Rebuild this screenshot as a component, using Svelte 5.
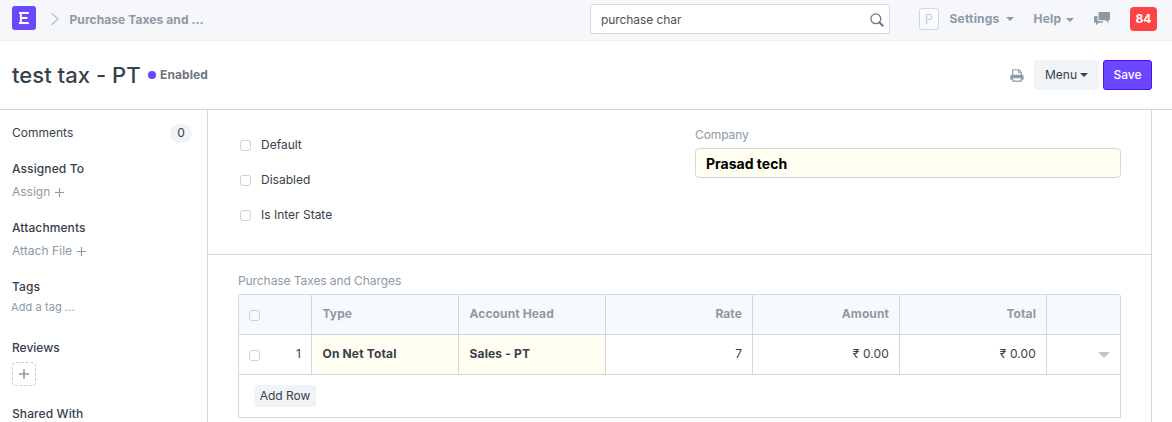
<script>
  const checks = ['Default', 'Disabled', 'Is Inter State'];
</script>

<div class="page">
  <header class="navbar">
    <div class="logo">
      <svg width="24" height="24" viewBox="0 0 24 24"><path d="M7 7h9.800M8.900 7v10M7 17h9.800M8.900 12h6.600" fill="none" stroke="#fff" stroke-width="2" /></svg>
    </div>
    <svg class="crumb-sep" width="10" height="14" viewBox="0 0 10 14"><path d="M1.500 1l6.300 6-6.300 6" fill="none" stroke="#b8c2cc" stroke-width="1.400" /></svg>
    <span class="crumb">Purchase Taxes and ...</span>
    <div class="search">
      <span>purchase char</span>
      <svg width="14" height="14" viewBox="0 0 14 14"><circle cx="5.800" cy="5.800" r="4.900" fill="none" stroke="#6c7680" stroke-width="1.300" /><path d="M9.200 9.200l4 4" stroke="#6c7680" stroke-width="2" /></svg>
    </div>
    <div class="avatar">P</div>
    <span class="nav-item settings">Settings<i class="caret"></i></span>
    <span class="nav-item help">Help<i class="caret"></i></span>
    <svg class="chat" width="16" height="14" viewBox="0 0 16 14"><path d="M5.500 0h9.500a1 1 0 0 1 1 1v6.200a1 1 0 0 1-1 1h-.5v2.600L11.800 8.200H5.500a1 1 0 0 1-1-1V1a1 1 0 0 1 1-1z" fill="#8d99a6" /><path d="M1 4h2.500v3.700A1.500 1.500 0 0 0 5 9.200h4v.6a1 1 0 0 1-1 1H4.800L2 13.200v-2.400H1a1 1 0 0 1-1-1V5a1 1 0 0 1 1-1z" fill="#8d99a6" /></svg>
    <div class="count">84</div>
  </header>

  <div class="head">
    <h1>test tax - PT</h1>
    <i class="dot"></i>
    <span class="status">Enabled</span>
    <svg class="print" width="14" height="13" viewBox="0 0 14 13"><path d="M2.700 6V.8h6.200L11.300 3.200V6" fill="none" stroke="#8d99a6" stroke-width="1.100" /><path d="M8.500 1v2.600h2.700" fill="none" stroke="#8d99a6" stroke-width=".9" /><path d="M2 5.800h10A1.600 1.600 0 0 1 13.600 7.400v3.400H.4V7.400A1.600 1.600 0 0 1 2 5.800z" fill="#8d99a6" /><path d="M2.700 8.800h8.600v3.300H2.700z" fill="#fff" stroke="#8d99a6" stroke-width="1.100" /></svg>
    <button class="menu">Menu<i class="caret"></i></button>
    <button class="save">Save</button>
  </div>

  <div class="body">
    <aside>
      <div class="comments"><span>Comments</span><b>0</b></div>
      <h2>Assigned To</h2>
      <div class="action">Assign <svg width="9" height="9" viewBox="0 0 9 9"><path d="M4.500 0v9M0 4.500h9" stroke="#8d99a6" stroke-width="1.200" /></svg></div>
      <h2>Attachments</h2>
      <div class="action attach">Attach File <svg width="9" height="9" viewBox="0 0 9 9"><path d="M4.500 0v9M0 4.500h9" stroke="#8d99a6" stroke-width="1.200" /></svg></div>
      <h2>Tags</h2>
      <div class="tag">Add a tag ...</div>
      <h2 class="reviews">Reviews</h2>
      <div class="add"><svg width="10" height="10" viewBox="0 0 10 10"><path d="M5 0v10M0 5h10" stroke="#8d99a6" stroke-width="1.500" /></svg></div>
      <h2 class="shared">Shared With</h2>
    </aside>

    <main>
      <section class="fields">
        <div class="checks">
          {#each checks as label}
            <div class="check"><i class="box"></i><span>{label}</span></div>
          {/each}
        </div>
        <div class="company">
          <div class="label">Company</div>
          <div class="input">Prasad tech</div>
        </div>
      </section>
      <section class="taxes">
        <div class="label">Purchase Taxes and Charges</div>
        <div class="grid">
          <div class="row heading">
            <div class="idx"><i class="box"></i></div>
            <div>Type</div>
            <div>Account Head</div>
            <div class="num">Rate</div>
            <div class="num">Amount</div>
            <div class="num">Total</div>
            <div></div>
          </div>
          <div class="row">
            <div class="idx"><i class="box"></i><span>1</span></div>
            <div class="req">On Net Total</div>
            <div class="req">Sales - PT</div>
            <div class="num">7</div>
            <div class="num money">₹ 0.00</div>
            <div class="num money">₹ 0.00</div>
            <div class="num open"><i class="caret"></i></div>
          </div>
        </div>
        <div class="footer"><button>Add Row</button></div>
      </section>
    </main>
  </div>
</div>

<style>
  :global(body) { background: #fff; overflow: hidden; }
  .page, .page * { box-sizing: border-box; }
  .page {
    height: 422px;
    overflow: hidden;
    display: flex;
    flex-direction: column;
    font-family: Inter, "Noto Sans", sans-serif;
    font-size: 12px;
    line-height: 18px;
    color: #36414c;
  }
  button { font: inherit; border: 0; padding: 0; border-radius: 3px; }
  svg { display: block; flex: none; }
  .caret {
    display: inline-block;
    border: 4px solid transparent;
    border-top-color: currentColor;
    border-bottom: 0;
  }
  .navbar {
    height: 41px;
    flex: none;
    display: flex;
    align-items: flex-start;
    background: #f5f7fa;
    border-bottom: 1px solid #ebeff2;
    color: #8d99a6;
    font-weight: 700;
  }
  .logo { width: 24px; height: 24px; margin: 6px 0 0 12px; border-radius: 3px; background: #6b48ff; }
  .crumb-sep { margin: 12px 0 0 14px; }
  .crumb { margin: 11px 0 0 9.5px; width: 520.5px; letter-spacing: 0.08px; }
  .search {
    width: 300px;
    height: 30px;
    margin-top: 4px;
    padding: 1px 5px 0 10px;
    display: flex;
    align-items: center;
    justify-content: space-between;
    background: #fff;
    border: 1px solid #d1d8dd;
    border-radius: 3px;
    color: #4c5054;
    font-weight: 400;
    letter-spacing: -0.08px;
  }
  .avatar {
    width: 20px;
    height: 22px;
    margin: 8px 0 0 29px;
    border: 1px solid #d1d8dd;
    border-radius: 3px;
    background: #fafbfc;
    color: #c9d1d7;
    font-size: 13px;
    line-height: 20px;
    text-align: center;
    font-weight: 400;
  }
  .nav-item { display: flex; align-items: center; gap: 5px; margin-top: 10px; white-space: nowrap; letter-spacing: 0.2px; }
  .settings { margin-left: 10.5px; width: 84px; }
  .help { width: 60.5px; }
  .settings .caret { margin-left: 1px; }
  .help .caret { margin-top: 1px; }
  .chat { margin-top: 12px; }
  .count {
    width: 27px;
    height: 24px;
    margin: 7px 0 0 20px;
    border-radius: 4px;
    background: #ff4245;
    color: #fff;
    line-height: 24px;
    text-align: center;
  }
  .head {
    height: 69px;
    flex: none;
    display: flex;
    align-items: center;
    padding: 0 20px 0 12px;
    border-bottom: 1px solid #d1d8dd;
  }
  h1 { margin: 0; width: 136px; font-size: 22px; line-height: 30px; font-weight: 500; white-space: nowrap; letter-spacing: 0.04px; }
  .dot { width: 8px; height: 8px; border-radius: 50%; background: #6b48ff; }
  .status { margin-left: 4px; font-weight: 700; color: #6c7680; letter-spacing: 0.1px; }
  .print { margin-left: auto; }
  .menu {
    width: 65px;
    height: 30px;
    margin-left: 10px;
    display: flex;
    align-items: center;
    justify-content: center;
    gap: 3px;
    background: #f0f4f7;
    color: #36414c;
  }
  .save { width: 49px; height: 30px; margin-left: 4px; background: #6b48ff; border: 1px solid #4f0cff; color: #fff; font-weight: 500; }
  .body { flex: 1; display: flex; min-height: 0; }
  aside { width: 208px; flex: none; padding: 14px 15px 0 12px; border-right: 1px solid #d1d8dd; }
  .comments { display: flex; justify-content: space-between; height: 18px; }
  .comments b { width: 22px; height: 19px; border-radius: 10px; background: #f0f4f7; font-weight: 400; text-align: center; }
  h2 { margin: 18px 0 0; font-size: 12px; line-height: 18px; font-weight: 500; letter-spacing: 0.1px; }
  .action { display: flex; align-items: center; gap: 5px; margin-top: 5px; color: #8d99a6; }
  .attach { letter-spacing: 0.05px; }
  .tag { margin: 3px 0 0 -1px; font-size: 11px; line-height: 16px; color: #8d99a6; letter-spacing: 0.08px; }
  .reviews { margin-top: 24px; letter-spacing: 0; }
  .add {
    width: 24px;
    height: 24px;
    margin-top: 5px;
    display: grid;
    place-items: center;
    border: 1px dashed #c4ced6;
    border-radius: 4px;
  }
  .shared { margin-top: 19px; }
  main { width: 944px; flex: none; border-right: 1px solid #d1d8dd; }
  .fields { height: 145px; display: flex; border-bottom: 1px solid #d1d8dd; }
  .checks { width: 487px; padding: 26px 0 0 32px; display: flex; flex-direction: column; gap: 17px; }
  .check { display: flex; align-items: center; gap: 10px; }
  .box { width: 11px; height: 11px; flex: none; border: 1px solid #c9d3da; border-radius: 3px; background: #fff; }
  .label { color: #8d99a6; letter-spacing: -0.08px; }
  .company { width: 426px; padding-top: 16px; }
  .input {
    height: 30px;
    margin-top: 4px;
    padding: 0 10px;
    border: 1px solid #d1d8dd;
    border-radius: 4px;
    background: #fffef0;
    color: #000;
    font-size: 14px;
    line-height: 29px;
    font-weight: 700;
  }
  .taxes { padding: 17px 30px 0; }
  .grid { margin-top: 4px; border: 1px solid #d1d8dd; border-bottom: 0; border-radius: 3px 3px 0 0; overflow: hidden; }
  .row { height: 40px; display: grid; grid-template-columns: 73px repeat(5, 147px) 1fr; border-bottom: 1px solid #d1d8dd; }
  .row > div { padding: 10px 10px 0 10.5px; border-right: 1px solid #d1d8dd; }
  .row > div:last-child { border-right: 0; }
  .row > .idx { display: flex; justify-content: space-between; padding-left: 10px; }
  .idx .box { margin-top: 5px; }
  .heading { background: #f7fafc; color: #8d99a6; font-weight: 700; letter-spacing: 0.1px; }
  .heading .box { background: transparent; }
  .req { background: #fffef0; font-weight: 700; letter-spacing: 0.16px; }
  .num { text-align: right; }
  .money { letter-spacing: 0.12px; }
  .open { color: #c4c4c4; }
  .open .caret { border-width: 6px 6px 0; }
  .footer { height: 43px; padding: 10px 15px; border: 1px solid #d1d8dd; border-top: 0; }
  .footer button { display: block; width: 62px; height: 22px; background: #f0f4f7; color: #36414c; }
</style>
